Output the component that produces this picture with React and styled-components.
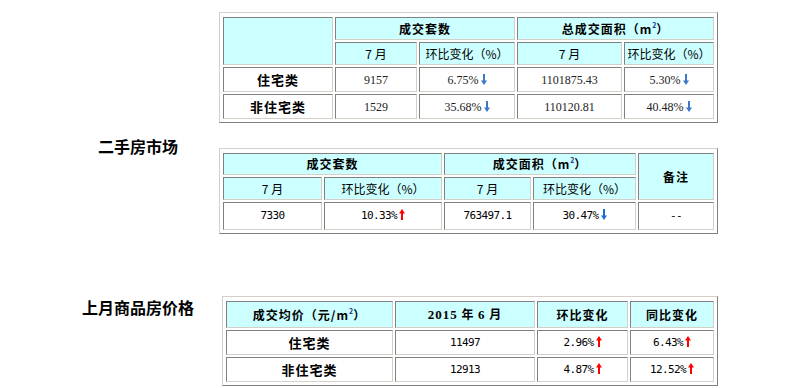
import styled, { createGlobalStyle } from 'styled-components';

const GlobalStyle = createGlobalStyle`
    body {
        margin: 0;
        background: #ffffff;
        font-family: "Noto Sans CJK SC", "Liberation Sans", sans-serif;
        color: #000000;
    }
`;

const Page = styled.div`
    width: 790px;
    height: 388px;
    overflow: hidden;
    padding-top: 12px;
    box-sizing: border-box;
`;

const Section = styled.div`
    display: flex;
    align-items: flex-start;
    margin-top: ${(p) => p.$gap || 0}px;
`;

const Side = styled.div`
    width: 162px;
    margin-left: 57px;
    flex-shrink: 0;
`;

const Heading = styled.h2`
    margin: ${(p) => p.$offset || 0}px 0 0;
    font-size: 16px;
    line-height: 16px;
    font-weight: 700;
    text-align: center;
    white-space: nowrap;
`;

const Table = styled.table`
    border-collapse: separate;
    border-spacing: 2px;
    padding: 2px 1px 1px 1px;
    border: 1px solid;
    border-color: #d4d0c8 #808080 #808080 #d4d0c8;
    table-layout: fixed;
    margin-left: ${(p) => p.$shift || 0}px;
`;

const cellBorder = `
    border: 1px solid;
    border-color: #808080 #d4d0c8 #d4d0c8 #808080;
    padding: 0;
    text-align: center;
    vertical-align: middle;
    box-sizing: border-box;
    line-height: 14px;
`;

const Head = styled.th`
    ${cellBorder}
    background: #ccffff;
    height: ${(p) => p.$h || 23}px;
    font-size: 12px;
    font-weight: ${(p) => (p.$light ? 400 : 700)};
    letter-spacing: ${(p) => (p.$light ? 0 : 1)}px;
    white-space: nowrap;
`;

const Label = styled.td`
    ${cellBorder}
    height: ${(p) => p.$h || 24}px;
    font-size: 13px;
    font-weight: 700;
    letter-spacing: 1px;
`;

const Cell = styled.td`
    ${cellBorder}
    height: ${(p) => p.$h || 24}px;
    font-size: ${(p) => (p.$mono ? 11 : 12)}px;
    letter-spacing: ${(p) => (p.$mono ? -0.6 : 0)}px;
    font-family: ${(p) =>
        p.$mono
            ? '"DejaVu Sans Mono", "Liberation Mono", monospace'
            : '"Liberation Serif", serif'};
    color: ${(p) => (p.$mono ? '#000000' : '#222222')};
    white-space: nowrap;
`;

const Serif = styled.span`
    font-family: "Liberation Serif", "Noto Sans CJK SC", serif;
    font-weight: 700;
    font-size: 13px;
`;

const Sup = styled.sup`
    font-size: 7px;
    vertical-align: top;
    color: #1c2f8f;
    line-height: 7px;
    letter-spacing: 0;
`;

const ArrowSvg = styled.svg`
    margin-left: 2px;
    vertical-align: -1px;
`;

const Arrow = ({ up, color }) =>
    up ? (
        <ArrowSvg width="6" height="11" viewBox="0 0 6 11">
            <polygon points="3,0 6,4.5 0,4.5" fill={color || '#ff0000'} />
            <rect x="2" y="4" width="2" height="7" fill={color || '#ff0000'} />
        </ArrowSvg>
    ) : (
        <ArrowSvg width="6" height="11" viewBox="0 0 6 11">
            <rect x="2" y="0" width="2" height="7" fill={color || '#3b78c5'} />
            <polygon points="0,6.5 6,6.5 3,11" fill={color || '#3b78c5'} />
        </ArrowSvg>
    );

const M2 = () => (
    <>
        m<Sup>2</Sup>
    </>
);

const newHouses = [
    { name: '住宅类', count: '9157', countRate: '6.75%', area: '1101875.43', areaRate: '5.30%' },
    { name: '非住宅类', count: '1529', countRate: '35.68%', area: '110120.81', areaRate: '40.48%' },
];

const prices = [
    { name: '住宅类', price: '11497', mom: '2.96%', yoy: '6.43%' },
    { name: '非住宅类', price: '12913', mom: '4.87%', yoy: '12.52%' },
];

const App = () => {
    return (
        <>
            <GlobalStyle />
            <Page>
                <Section>
                    <Side />
                    <Table>
                        <colgroup>
                            <col style={{ width: 110 }} />
                            <col style={{ width: 82 }} />
                            <col style={{ width: 96 }} />
                            <col style={{ width: 105 }} />
                            <col style={{ width: 90 }} />
                        </colgroup>
                        <tbody>
                            <tr>
                                <Head rowSpan={2} />
                                <Head colSpan={2} $h={23}>成交套数</Head>
                                <Head colSpan={2} $h={23}>
                                    总成交面积（<M2 />）
                                </Head>
                            </tr>
                            <tr>
                                <Head $light $h={23}>7 月</Head>
                                <Head $light $h={23}>环比变化（%）</Head>
                                <Head $light $h={23}>7 月</Head>
                                <Head $light $h={23}>环比变化（%）</Head>
                            </tr>
                            {newHouses.map((r) => (
                                <tr key={r.name}>
                                    <Label $h={25}>{r.name}</Label>
                                    <Cell $h={25}>{r.count}</Cell>
                                    <Cell $h={25}>
                                        {r.countRate}
                                        <Arrow />
                                    </Cell>
                                    <Cell $h={25}>{r.area}</Cell>
                                    <Cell $h={25}>
                                        {r.areaRate}
                                        <Arrow />
                                    </Cell>
                                </tr>
                            ))}
                        </tbody>
                    </Table>
                </Section>

                <Section $gap={25}>
                    <Side>
                        <Heading $offset={-10}>二手房市场</Heading>
                    </Side>
                    <Table>
                        <colgroup>
                            <col style={{ width: 99 }} />
                            <col style={{ width: 118 }} />
                            <col style={{ width: 87 }} />
                            <col style={{ width: 103 }} />
                            <col style={{ width: 76 }} />
                        </colgroup>
                        <tbody>
                            <tr>
                                <Head colSpan={2} $h={22}>成交套数</Head>
                                <Head colSpan={2} $h={22}>
                                    成交面积（<M2 />）
                                </Head>
                                <Head rowSpan={2}>备注</Head>
                            </tr>
                            <tr>
                                <Head $light $h={23}>7 月</Head>
                                <Head $light $h={23}>环比变化（%）</Head>
                                <Head $light $h={23}>7 月</Head>
                                <Head $light $h={23}>环比变化（%）</Head>
                            </tr>
                            <tr>
                                <Cell $mono $h={28}>7330</Cell>
                                <Cell $mono $h={28}>
                                    10.33%
                                    <Arrow up />
                                </Cell>
                                <Cell $mono $h={28}>763497.1</Cell>
                                <Cell $mono $h={28}>
                                    30.47%
                                    <Arrow color="#1b6fd0" />
                                </Cell>
                                <Cell $mono $h={28}>--</Cell>
                            </tr>
                        </tbody>
                    </Table>
                </Section>

                <Section $gap={62}>
                    <Side>
                        <Heading $offset={3}>上月商品房价格</Heading>
                    </Side>
                    <Table $shift={3}>
                        <colgroup>
                            <col style={{ width: 167 }} />
                            <col style={{ width: 140 }} />
                            <col style={{ width: 91 }} />
                            <col style={{ width: 84 }} />
                        </colgroup>
                        <tbody>
                            <tr>
                                <Head $h={27}>
                                    成交均价（元/<M2 />）
                                </Head>
                                <Head $h={27}>
                                    <Serif>2015</Serif> 年 <Serif>6</Serif> 月
                                </Head>
                                <Head $h={27}>环比变化</Head>
                                <Head $h={27}>同比变化</Head>
                            </tr>
                            {prices.map((r) => (
                                <tr key={r.name}>
                                    <Label $h={25}>{r.name}</Label>
                                    <Cell $mono $h={25}>{r.price}</Cell>
                                    <Cell $mono $h={25}>
                                        {r.mom}
                                        <Arrow up />
                                    </Cell>
                                    <Cell $mono $h={25}>
                                        {r.yoy}
                                        <Arrow up />
                                    </Cell>
                                </tr>
                            ))}
                        </tbody>
                    </Table>
                </Section>
            </Page>
        </>
    );
};

export default App;
